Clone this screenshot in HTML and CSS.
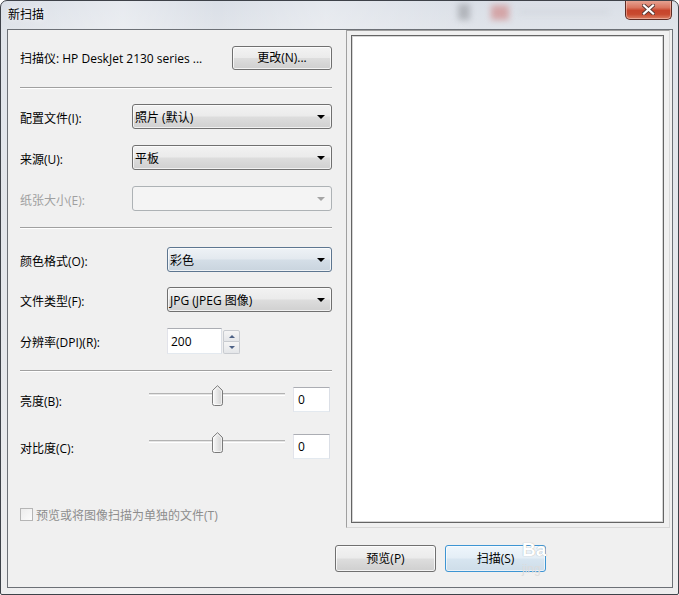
FILE: index.html
```html
<!DOCTYPE html>
<html lang="zh-CN">
<head>
<meta charset="utf-8">
<title>新扫描</title>
<link rel="stylesheet" href="styles.css">
</head>
<body>
<div class="window">
  <div class="glass-blur blur-a"></div>
  <div class="glass-blur blur-b"></div>
  <div class="glass-blur blur-c"></div>
  <div class="titlebar">
    <span class="title">新扫描</span>
    <button class="close" aria-label="关闭">
      <svg width="13" height="11" viewBox="0 0 13 11">
        <path d="M2 1.5 L11 9.5 M11 1.5 L2 9.5" stroke="#5b3a36" stroke-width="4" stroke-linecap="square"/>
        <path d="M2 1.5 L11 9.5 M11 1.5 L2 9.5" stroke="#ffffff" stroke-width="2.2" stroke-linecap="square"/>
      </svg>
    </button>
  </div>
  <div class="client">
    <div class="main">
      <div class="settings">
        <div class="row scanner-row">
          <span class="scanner-name">扫描仪: HP DeskJet 2130 series ...</span>
          <button class="btn btn-change">更改(N)...</button>
        </div>
        <div class="sep sep-a"></div>

        <div class="row field g1 r-first">
          <span class="lbl lbl-g1">配置文件(I):</span>
          <div class="combo combo-g1"><span class="combo-text">照片 (默认)</span><i class="arrow"></i></div>
        </div>
        <div class="row field g1">
          <span class="lbl lbl-g1">来源(U):</span>
          <div class="combo combo-g1"><span class="combo-text">平板</span><i class="arrow"></i></div>
        </div>
        <div class="row field g1">
          <span class="lbl lbl-g1 disabled">纸张大小(E):</span>
          <div class="combo combo-g1 combo-disabled"><span class="combo-text"></span><i class="arrow"></i></div>
        </div>
        <div class="sep sep-b"></div>

        <div class="row field r-color">
          <span class="lbl lbl-g2">颜色格式(O):</span>
          <div class="combo combo-g2 combo-focus"><span class="combo-text">彩色</span><i class="arrow"></i></div>
        </div>
        <div class="row field r-type">
          <span class="lbl lbl-g2">文件类型(F):</span>
          <div class="combo combo-g2"><span class="combo-text">JPG (JPEG 图像)</span><i class="arrow"></i></div>
        </div>
        <div class="row field r-dpi">
          <span class="lbl lbl-g2">分辨率(DPI)(R):</span>
          <div class="textbox dpi-box">200</div>
          <div class="spinner">
            <span class="spin spin-up"><i></i></span>
            <span class="spin spin-down"><i></i></span>
          </div>
        </div>
        <div class="sep sep-c"></div>

        <div class="row field r-bright">
          <span class="lbl lbl-g3">亮度(B):</span>
          <div class="slider">
            <div class="track"></div>
            <svg class="thumb" width="11" height="21" viewBox="0 0 11 21">
              <defs><linearGradient id="tg1" x1="0" x2="1" y1="0" y2="0"><stop offset="0" stop-color="#fbfbfb"/><stop offset="1" stop-color="#cfcfcf"/></linearGradient></defs>
              <path d="M0.5 5.5 L5.5 0.7 L10.5 5.5 V18.5 Q10.5 20.5 8.5 20.5 H2.5 Q0.5 20.5 0.5 18.5 Z" fill="url(#tg1)" stroke="#7a7a7a"/>
              <path d="M1.6 6 L5.5 2.2 L9.4 6 V18.5 Q9.4 19.4 8.5 19.4 H2.5 Q1.6 19.4 1.6 18.5 Z" fill="none" stroke="#ffffff" stroke-opacity="0.7"/>
            </svg>
          </div>
          <div class="textbox value-box">0</div>
        </div>
        <div class="row field r-contrast">
          <span class="lbl lbl-g3">对比度(C):</span>
          <div class="slider">
            <div class="track"></div>
            <svg class="thumb" width="11" height="21" viewBox="0 0 11 21">
              <defs><linearGradient id="tg2" x1="0" x2="1" y1="0" y2="0"><stop offset="0" stop-color="#fbfbfb"/><stop offset="1" stop-color="#cfcfcf"/></linearGradient></defs>
              <path d="M0.5 5.5 L5.5 0.7 L10.5 5.5 V18.5 Q10.5 20.5 8.5 20.5 H2.5 Q0.5 20.5 0.5 18.5 Z" fill="url(#tg2)" stroke="#7a7a7a"/>
              <path d="M1.6 6 L5.5 2.2 L9.4 6 V18.5 Q9.4 19.4 8.5 19.4 H2.5 Q1.6 19.4 1.6 18.5 Z" fill="none" stroke="#ffffff" stroke-opacity="0.7"/>
            </svg>
          </div>
          <div class="textbox value-box">0</div>
        </div>

        <div class="row check-row">
          <span class="checkbox"></span>
          <span class="check-label">预览或将图像扫描为单独的文件(T)</span>
        </div>
      </div>
      <div class="preview-pane">
        <div class="preview"></div>
      </div>
    </div>
    <div class="footer">
      <button class="btn btn-footer">预览(P)</button>
      <button class="btn btn-footer btn-scan">扫描(S)</button>
    </div>
  </div>
  <div class="watermark"><span class="wm-big">Ba</span><span class="wm-small">jing</span></div>
</div>
</body>
</html>
```

FILE: styles.css
```css
* { box-sizing: border-box; }

html, body {
  margin: 0;
  padding: 0;
}

body {
  width: 679px;
  height: 595px;
  overflow: hidden;
  background: #ffffff;
  font-family: "Open Sans", "Noto Sans CJK SC", sans-serif;
  font-size: 12px;
  color: #000;
}

.window {
  position: relative;
  width: 679px;
  height: 595px;
  border: 1px solid #3e4249;
  border-radius: 7px 7px 2px 2px;
  padding: 0 5px 6px 6px;
  display: flex;
  flex-direction: column;
  overflow: hidden;
  background:
    linear-gradient(to right, rgba(255,255,255,0) 0, rgba(255,255,255,0.35) 18%, rgba(255,255,255,0) 32%, rgba(255,255,255,0.3) 48%, rgba(255,255,255,0) 70%),
    linear-gradient(to bottom, #dadfe7 0, #e0e4ea 28px, #e5e7eb 60%, #ededee 100%);
}

.glass-blur {
  position: absolute;
  filter: blur(3px);
  pointer-events: none;
}
.blur-a { left: 457px; top: 3px; width: 12px; height: 16px; background: #8e9096; opacity: 0.55; }
.blur-b { left: 490px; top: 4px; width: 18px; height: 15px; background: #d08c8c; opacity: 0.7; }
.blur-c { left: 518px; top: 9px; width: 90px; height: 4px; background: #c4c7cd; opacity: 0.35; }

/* ---------- title bar ---------- */
.titlebar {
  position: relative;
  height: 28px;
  display: flex;
  justify-content: space-between;
  align-items: flex-start;
}

.title {
  padding: 6px 0 0 1px;
  line-height: 16px;
  font-size: 12px;
  color: #000;
  text-shadow: 0 0 6px rgba(255,255,255,0.9);
}

.close {
  margin: -1px 1px 0 0;
  width: 47px;
  height: 20px;
  border: 1px solid #5e2c24;
  border-top: none;
  border-radius: 0 0 5px 5px;
  padding: 0;
  display: flex;
  align-items: center;
  justify-content: center;
  background: linear-gradient(to bottom, #e8a898 0, #d9755f 40%, #c7452c 55%, #c84a2f 75%, #dc8064 100%);
  box-shadow: inset 0 0 0 1px rgba(255,220,210,0.45);
}

/* ---------- client ---------- */
.client {
  flex: 1;
  border: 1px solid #6c7076;
  background: #f0f0f0;
  display: flex;
  flex-direction: column;
}

.main {
  height: 498px;
  display: flex;
}

.settings {
  width: 338px;
  padding: 0 14px 0 12px;
  display: flex;
  flex-direction: column;
}

.row {
  display: flex;
  align-items: center;
}

.scanner-row {
  margin-top: 16px;
  height: 24px;
  justify-content: space-between;
}

.scanner-name {
  white-space: nowrap;
}

.sep {
  height: 2px;
  border-top: 1px solid #a0a0a0;
  border-bottom: 1px solid #ffffff;
}
.sep-a { margin-top: 17px; }
.sep-b { margin-top: 16px; }
.sep-c { margin-top: 16px; }

.field { height: 25px; }
.g1 { margin-top: 16px; }
.r-first { margin-top: 15px; }
.r-color { margin-top: 18px; }
.r-type { margin-top: 15px; }
.r-dpi { margin-top: 16px; height: 26px; }
.r-bright { margin-top: 15px; }
.r-contrast { margin-top: 22px; }

.lbl { white-space: nowrap; padding-top: 2px; }
.lbl-g1 { width: 112px; }
.lbl-g2 { width: 147px; }
.lbl-g3 { width: 129px; }
.lbl.disabled { color: #a0a0a0; }

/* ---------- buttons ---------- */
.btn {
  font: inherit;
  color: #000;
  padding: 0;
  border: 1px solid #707070;
  border-radius: 3px;
  background: linear-gradient(to bottom, #f3f3f3 0, #ebebeb 48%, #dddddd 52%, #cfcfcf 100%);
  box-shadow: inset 0 0 0 1px rgba(255,255,255,0.75);
  line-height: 16px;
}

.btn-change {
  width: 100px;
  height: 24px;
}

/* ---------- combos ---------- */
.combo {
  height: 25px;
  border: 1px solid #707070;
  border-radius: 3px;
  display: flex;
  align-items: center;
  padding: 0 6px 0 2px;
  background: linear-gradient(to bottom, #f2f2f2 0, #ebebeb 48%, #dddddd 52%, #d0d0d0 100%);
  box-shadow: inset 0 0 0 1px rgba(255,255,255,0.7);
}
.combo-g1 { width: 200px; }
.combo-g2 { width: 165px; }

.combo-text {
  flex: 1;
  white-space: nowrap;
}

.arrow {
  width: 0;
  height: 0;
  border-left: 4px solid transparent;
  border-right: 4px solid transparent;
  border-top: 4px solid #000;
  margin-top: 1px;
}

.combo-focus {
  border-color: #5d7690;
  background: linear-gradient(to bottom, #eef2f6 0, #e3e9ef 48%, #d4dee7 52%, #c9d4de 100%);
}

.combo-disabled {
  border-color: #adb2b5;
  background: #f4f4f4;
  box-shadow: none;
}
.combo-disabled .arrow { border-top-color: #a5a5a5; }

/* ---------- text boxes ---------- */
.textbox {
  background: #fff;
  border: 1px solid;
  border-color: #abadb3 #dbdfe6 #e3e9ef #e2e3ea;
  display: flex;
  align-items: center;
  padding-left: 3px;
}

.dpi-box {
  width: 55px;
  height: 26px;
}

.spinner {
  margin-left: 1px;
  display: flex;
  flex-direction: column;
  height: 26px;
  padding: 2px 0 0;
}
.spin {
  width: 17px;
  height: 12px;
  border: 1px solid #c8cbd0;
  background: linear-gradient(to bottom, #f5f5f5, #e4e6e9);
  display: flex;
  align-items: center;
  justify-content: center;
}
.spin-up { border-radius: 2px 2px 0 0; }
.spin-down { border-radius: 0 0 2px 2px; border-top: none; }
.spin i {
  width: 0;
  height: 0;
  border-left: 3px solid transparent;
  border-right: 3px solid transparent;
}
.spin-up i { border-bottom: 3px solid #4d6185; }
.spin-down i { border-top: 3px solid #4d6185; }

.value-box {
  width: 37px;
  height: 25px;
  margin-left: 8px;
  padding-left: 4px;
}

/* ---------- sliders ---------- */
.slider {
  position: relative;
  width: 136px;
  height: 22px;
  align-self: flex-start;
  margin-top: -2px;
}
.track {
  position: absolute;
  left: 0;
  right: 0;
  top: 8px;
  height: 3px;
  border-top: 1px solid #b3b3b3;
  border-bottom: 1px solid #ffffff;
  background: #e5e5e5;
}
.thumb {
  position: absolute;
  left: 63px;
  top: 0;
}

/* ---------- checkbox ---------- */
.check-row {
  margin-top: 49px;
  height: 13px;
}
.checkbox {
  width: 13px;
  height: 13px;
  border: 1px solid #b5b5b5;
  background: linear-gradient(to bottom right, #ececec, #fbfbfb);
}
.check-label {
  margin-left: 3px;
  color: #8d8d8d;
  white-space: nowrap;
}

/* ---------- preview pane ---------- */
.preview-pane {
  width: 324px;
  height: 498px;
  border: 1px solid;
  border-color: #a0a0a0 #d8d8d8 #d8d8d8 #a0a0a0;
  padding: 4px 5px 4px 4px;
}
.preview {
  height: 100%;
  background: #fff;
  border: 1px solid #646464;
  box-shadow: inset 0 0 0 1px #d6d6d6;
}

/* ---------- footer ---------- */
.footer {
  display: flex;
  padding: 17px 0 0 327px;
  gap: 9px;
}
.btn-footer {
  width: 101px;
  height: 27px;
}
.btn-scan {
  border-color: #3d95d3;
  background: linear-gradient(to bottom, #eef6fc 0, #e4eef6 48%, #d7e5f0 52%, #cedde9 100%);
  box-shadow: inset 0 0 0 1px rgba(255,255,255,0.6);
}

/* ---------- watermark ---------- */
.watermark {
  position: absolute;
  left: 521px;
  top: 538px;
  display: flex;
  flex-direction: column;
  pointer-events: none;
  font-family: "Liberation Sans", sans-serif;
}
.wm-big {
  font-size: 19px;
  font-weight: bold;
  line-height: 22px;
  color: #ffffff;
  text-shadow: 0 0 1px #9a9a9a;
}
.wm-small {
  font-size: 12px;
  line-height: 16px;
  color: #dcdcdc;
}
```
